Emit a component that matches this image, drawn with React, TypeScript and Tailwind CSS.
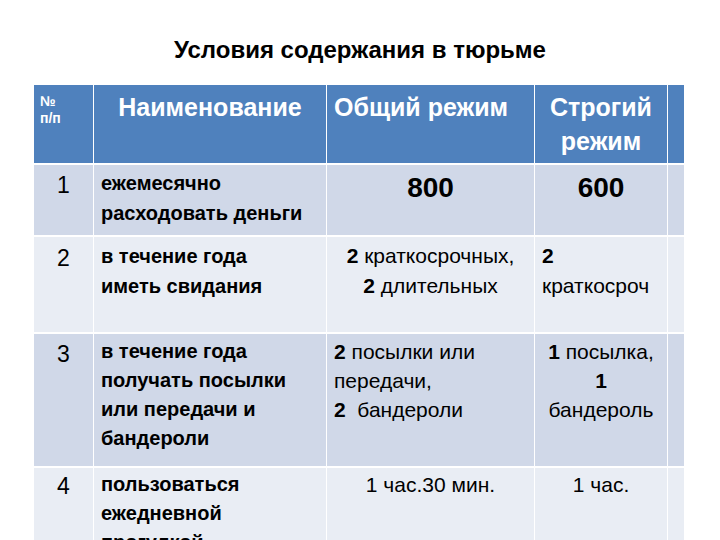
import React from "react";

const font = { fontFamily: '"Liberation Sans", Arial, sans-serif' };

function Cell({ children, className = "" }: { children?: React.ReactNode; className?: string }) {
  return <div className={"overflow-hidden " + className}>{children}</div>;
}

export default function App() {
  const odd = "bg-[#d0d8e8]";
  const even = "bg-[#e9edf4]";
  const head = "bg-[#4f81bd] text-white";

  return (
    <div className="w-[720px] h-[540px] overflow-hidden bg-white text-black" style={font}>
      <h1 className="pt-[36px] text-center text-[24px] font-bold leading-[28px]">
        Условия содержания в тюрьме
      </h1>

      <div className="ml-[34px] mt-[21px] grid w-[650px] grid-cols-[59px_232px_207px_132px_16px] grid-rows-[78px_70px_95px_132px_100px] gap-x-px gap-y-[2px]">
        {/* header */}
        <Cell className={head + " px-[6px] pt-[8px] text-[14px] font-bold leading-[17px]"}>
          №<br />п/п
        </Cell>
        <Cell className={head + " pt-[5px] text-center text-[25px] font-bold leading-[34px]"}>Наименование</Cell>
        <Cell className={head + " pl-[7px] pt-[5px] text-[25px] font-bold leading-[34px] whitespace-nowrap"}>
          Общий режим
        </Cell>
        <Cell className={head + " pt-[5px] text-center text-[25px] font-bold leading-[34px]"}>
          Строгий
          <br />
          режим
        </Cell>
        <Cell className={head} />

        {/* row 1 */}
        <Cell className={odd + " pt-[5px] text-center text-[23px] leading-[30px]"}>1</Cell>
        <Cell className={odd + " pl-[7px] pt-[3px] text-[20px] font-bold leading-[30px]"}>
          ежемесячно
          <br />
          расходовать деньги
        </Cell>
        <Cell className={odd + " pt-[6px] text-center text-[28px] font-bold leading-[34px]"}>800</Cell>
        <Cell className={odd + " pt-[6px] text-center text-[28px] font-bold leading-[34px]"}>600</Cell>
        <Cell className={odd} />

        {/* row 2 */}
        <Cell className={even + " pt-[6px] text-center text-[23px] leading-[30px]"}>2</Cell>
        <Cell className={even + " pl-[7px] pt-[4px] text-[20px] font-bold leading-[30px]"}>
          в течение года
          <br />
          иметь свидания
        </Cell>
        <Cell className={even + " pt-[4px] text-center text-[21px] leading-[30px] whitespace-nowrap"}>
          <b>2</b> краткосрочных,
          <br />
          <b>2</b> длительных
        </Cell>
        <Cell className={even + " pl-[7px] pt-[4px] text-[21px] leading-[30px] whitespace-nowrap"}>
          <b>2</b>
          <br />
          краткосроч
        </Cell>
        <Cell className={even} />

        {/* row 3 */}
        <Cell className={odd + " pt-[5px] text-center text-[23px] leading-[30px]"}>3</Cell>
        <Cell className={odd + " pl-[7px] pt-[3px] text-[20px] font-bold leading-[29px]"}>
          в течение года
          <br />
          получать посылки
          <br />
          или передачи и
          <br />
          бандероли
        </Cell>
        <Cell className={odd + " pl-[7px] pt-[3px] text-[21px] leading-[29px]"}>
          <b>2</b> посылки или
          <br />
          передачи,
          <br />
          <b>2</b>&nbsp; бандероли
        </Cell>
        <Cell className={odd + " pt-[3px] text-center text-[21px] leading-[29px]"}>
          <b>1</b> посылка,
          <br />
          <b>1</b>
          <br />
          бандероль
        </Cell>
        <Cell className={odd} />

        {/* row 4 */}
        <Cell className={even + " pt-[3px] text-center text-[23px] leading-[30px]"}>4</Cell>
        <Cell className={even + " pl-[7px] pt-[2px] text-[20px] font-bold leading-[29px]"}>
          пользоваться
          <br />
          ежедневной
          <br />
          прогулкой
        </Cell>
        <Cell className={even + " pt-[2px] text-center text-[21px] leading-[29px]"}>1 час.30 мин.</Cell>
        <Cell className={even + " pt-[2px] text-center text-[21px] leading-[29px]"}>1 час.</Cell>
        <Cell className={even} />
      </div>
    </div>
  );
}
